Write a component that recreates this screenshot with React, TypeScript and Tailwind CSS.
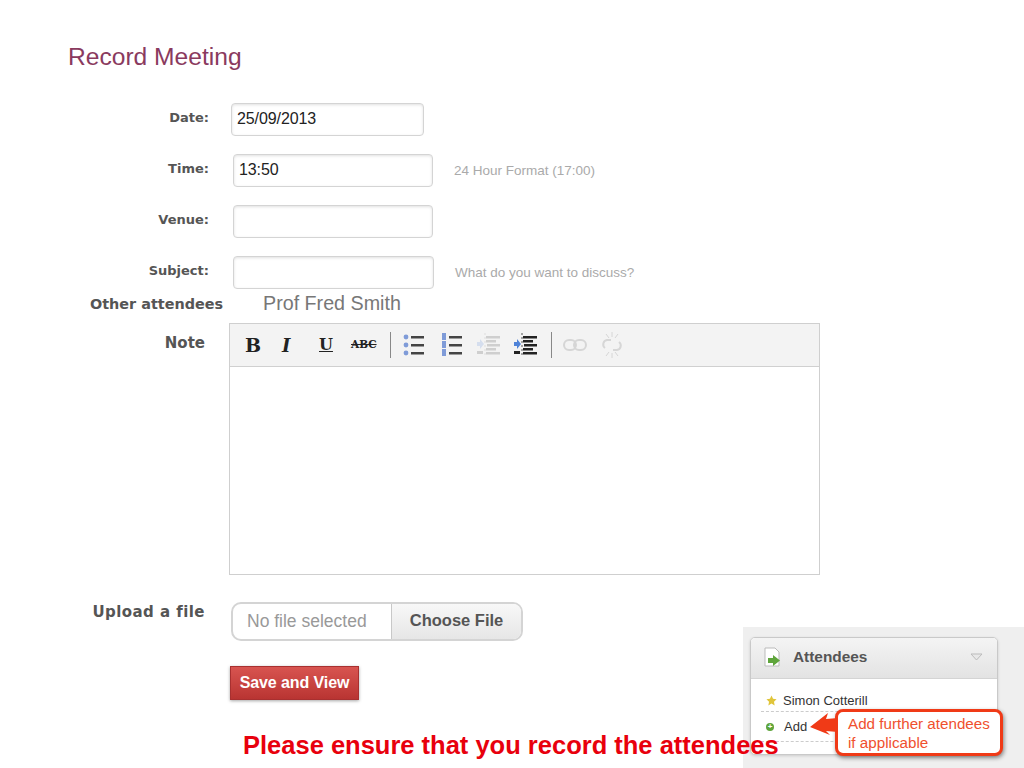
import React from 'react';

const inputCls =
  'h-[33px] rounded-[4px] border border-[#d4d4d4] bg-white px-[5px] pb-[2px] text-[16px] tracking-[-0.1px] text-[#222] shadow-[inset_0_1px_3px_rgba(0,0,0,0.12)] flex items-center';
const labelCls = "w-[209px] shrink-0 text-right font-['DejaVu_Sans'] text-[13px] font-bold text-[#555]";

function FormRow({ label, value, hint, inputClass }: { label: string; value?: string; hint?: string; inputClass: string }) {
  return (
    <div className="flex h-[33px] items-center">
      <div className={labelCls + ' -mt-[3px]'}>{label}</div>
      <div className={inputCls + ' ' + inputClass}>{value}</div>
      {hint && <div className="ml-[21px] mt-[1px] text-[13.5px] text-[#aaa]">{hint}</div>}
    </div>
  );
}

function ListIcon({ numbered }: { numbered?: boolean }) {
  return (
    <svg width="22" height="24" viewBox="0 0 22 24">
      {[4, 12, 20].map((y) =>
        numbered ? (
          <rect key={y} x="1" y={y - 4} width="4" height="7" fill="#7f9bd8" />
        ) : (
          <circle key={y} cx="3" cy={y} r="2.4" fill="#7f9bd8" />
        ),
      )}
      {[4, 12, 20].map((y) => (
        <rect key={y} x="8" y={y - 1} width="13" height="2.5" fill="#444" />
      ))}
    </svg>
  );
}

function IndentIcon({ faded }: { faded?: boolean }) {
  const bar = faded ? '#cfcfcf' : '#222';
  return (
    <svg width="24" height="24" viewBox="0 0 24 24">
      <line x1="9" y1="0" x2="9" y2="24" stroke={faded ? '#ddd' : '#555'} strokeDasharray="2 2" />
      {[3, 7, 11, 15, 19].map((y, i) => (
        <rect key={y} x={i === 2 ? 11 : 10} y={y} width={i % 2 ? 10 : 14} height="2.5" fill={bar} />
      ))}
      <rect x="1" y="18" width="6" height="3" fill={bar} />
      <path d="M1 9h3V6l4 5-4 5v-3H1z" fill={faded ? '#d5deee' : '#4f83d8'} />
    </svg>
  );
}

function LinkIcon({ broken }: { broken?: boolean }) {
  return broken ? (
    <svg width="24" height="28" viewBox="0 0 24 28" fill="none" stroke="#d6d6d6" strokeWidth="2">
      <path d="M11 9H7a4.5 4.5 0 0 0-2 8" />
      <path d="M13 19h4a4.5 4.5 0 0 0 2-8" />
      <path d="M12 1v5M12 22v5M18 3l-3 4M6 25l3-4M6 3l3 4M18 25l-3-4" strokeWidth="1" />
    </svg>
  ) : (
    <svg width="24" height="12" viewBox="0 0 24 12" fill="none" stroke="#d6d6d6" strokeWidth="2">
      <rect x="1" y="1" width="12" height="10" rx="5" />
      <rect x="11" y="1" width="12" height="10" rx="5" />
    </svg>
  );
}

function Toolbar() {
  return (
    <div className="flex h-[43px] items-center border-b border-[#d0d0d0] bg-[#f3f3f3] pl-[15px]">
      <span className="w-[37px] font-['DejaVu_Serif'] text-[19px] font-bold text-[#222]">B</span>
      <span className="w-[37px] font-['DejaVu_Serif'] text-[18px] font-bold italic text-[#222]">I</span>
      <span className="w-[32px] font-['DejaVu_Serif'] text-[16px] font-bold text-[#222] underline">U</span>
      <span className="w-[39px] font-['DejaVu_Serif'] text-[10.500px] font-bold text-[#222] line-through">ABC</span>
      <div className="h-[26px] w-px bg-[#888]" />
      <div className="ml-[12px] w-[38px]"><ListIcon /></div>
      <div className="w-[35px]"><ListIcon numbered /></div>
      <div className="w-[37px]"><IndentIcon faded /></div>
      <div className="w-[38px]"><IndentIcon /></div>
      <div className="h-[26px] w-px bg-[#888]" />
      <div className="ml-[11px] w-[37px]"><LinkIcon /></div>
      <LinkIcon broken />
    </div>
  );
}

function AttendeesPanel() {
  return (
    <div className="absolute bottom-0 right-0 h-[141px] w-[281px] bg-[#efefef] pl-[7px] pt-[10px]">
      <div className="h-[118px] w-[248px] overflow-hidden rounded-[5px] border border-[#c9c9c9] bg-white shadow-[0_1px_3px_rgba(0,0,0,0.15)]">
        <div className="flex h-[41px] items-center border-b border-[#d4d4d4] bg-gradient-to-b from-[#f4f4f4] to-[#e3e3e3] pb-[2px] pl-[13px] pr-[14px]">
          <svg width="18" height="21" viewBox="0 0 18 21">
            <path d="M1 1h10l4 4v14H1z" fill="#fff" stroke="#bbb" />
            <path d="M4 11h5V8l7 5.500-7 5.500v-3H4z" fill="#5fa53c" />
          </svg>
          <span className="ml-[11px] text-[15.400px] font-bold text-[#555]">Attendees</span>
          <svg className="ml-auto" width="13" height="8" viewBox="0 0 13 8">
            <path d="M1 1h11L6.500 7z" fill="#e8e8e8" stroke="#bbb" />
          </svg>
        </div>
        <div className="px-[10px] pt-[11px] text-[13px] text-[#333]">
          <div className="flex h-[22px] items-center border-b border-dashed border-[#ccc]">
            <svg className="ml-[5px] mr-[6px]" width="11" height="11" viewBox="0 0 24 24">
              <path d="M12 1l3.400 7.300 7.600 1-5.600 5.400 1.500 8L12 18.800 5.100 22.700l1.500-8L1 9.300l7.600-1z" fill="#e0c53a" />
            </svg>
            Simon Cotterill
          </div>
          <div className="flex h-[30px] items-center border-b border-dashed border-[#ccc]">
            <span className="ml-[5px] mr-[10px] flex h-[8px] w-[8px] items-center justify-center rounded-full bg-[#5fa53c] text-[8px] font-bold leading-none text-white">+</span>
            Add
          </div>
        </div>
      </div>
    </div>
  );
}

function Callout() {
  return (
    <>
      <div className="absolute left-[835px] top-[709px] h-[47px] w-[168px] rounded-[8px] border-[3px] border-[#f03a17] bg-white pl-[10px] pt-[2px] text-[15.200px] leading-[19px] text-[#f0502e] shadow-[1px_2px_4px_rgba(0,0,0,0.45)]">
        Add further atendees
        <br />
        if applicable
      </div>
      <svg className="absolute left-[808px] top-[711px]" width="32" height="26" viewBox="0 0 32 26">
        <path d="M2 16 L20 2 L18 8 L30 7 L30 21 L18 20 L22 24 Z" fill="#f03a17" />
      </svg>
    </>
  );
}

export default function App() {
  return (
    <div className="relative h-[768px] w-[1024px] overflow-hidden bg-white font-['Liberation_Sans',sans-serif]">
      <h1 className="pl-[68px] pt-[43px] text-[24.600px] leading-[28px] text-[#8a3a5e]">Record Meeting</h1>

      <div className="mt-[32px] flex flex-col gap-[18px]">
        <FormRow label="Date:" value="25/09/2013" inputClass="ml-[22px] w-[193px]" />
        <FormRow label="Time:" value="13:50" hint="24 Hour Format (17:00)" inputClass="ml-[24px] w-[200px]" />
        <FormRow label="Venue:" inputClass="ml-[24px] w-[200px]" />
        <FormRow label="Subject:" hint="What do you want to discuss?" inputClass="ml-[24px] w-[201px]" />
      </div>

      <div className="mt-[3px] flex h-[24px] items-center">
        <div className="ml-[90px] mt-[2px] w-[173px] font-['DejaVu_Sans'] text-[14.400px] font-bold text-[#555]">Other attendees</div>
        <div className="text-[19.700px] text-[#777]">Prof Fred Smith</div>
      </div>

      <div className="mt-[7px] flex">
        <div className="w-[205px] pt-[9px] text-right font-['DejaVu_Sans'] text-[15px] font-bold text-[#555]">Note</div>
        <div className="ml-[24px] h-[252px] w-[591px] border border-[#cfcfcf] bg-white">
          <Toolbar />
        </div>
      </div>

      <div className="mt-[27px] flex">
        <div className="-mt-[1px] w-[205px] text-right font-['DejaVu_Sans'] text-[15px] font-bold tracking-[0.45px] text-[#555]">Upload a file</div>
        <div className="ml-[26px] flex h-[39px] w-[292px] overflow-hidden rounded-[10px] border-2 border-[#d4d4d4] bg-white">
          <div className="flex w-[159px] items-center border-r border-[#c8c8c8] pl-[14px] text-[17.500px] text-[#999]">No file selected</div>
          <div className="flex flex-1 items-center justify-center bg-gradient-to-b from-[#f8f8f8] to-[#e6e6e6] pb-[3px] text-[16.500px] font-bold text-[#555]">Choose File</div>
        </div>
      </div>

      <button className="ml-[230px] mt-[25px] flex h-[34px] w-[129px] items-center justify-center border border-[#a83030] bg-gradient-to-b from-[#d85450] to-[#b93432] text-[16px] font-bold tracking-[-0.1px] text-white shadow-[0_1px_3px_rgba(0,0,0,0.35)]">
        Save and View
      </button>

      <AttendeesPanel />
      <div className="absolute left-[243px] top-[731px] text-[25.500px] font-bold leading-[28px] text-[#e8000d]">Please ensure that you record the attendees</div>
      <Callout />
    </div>
  );
}
